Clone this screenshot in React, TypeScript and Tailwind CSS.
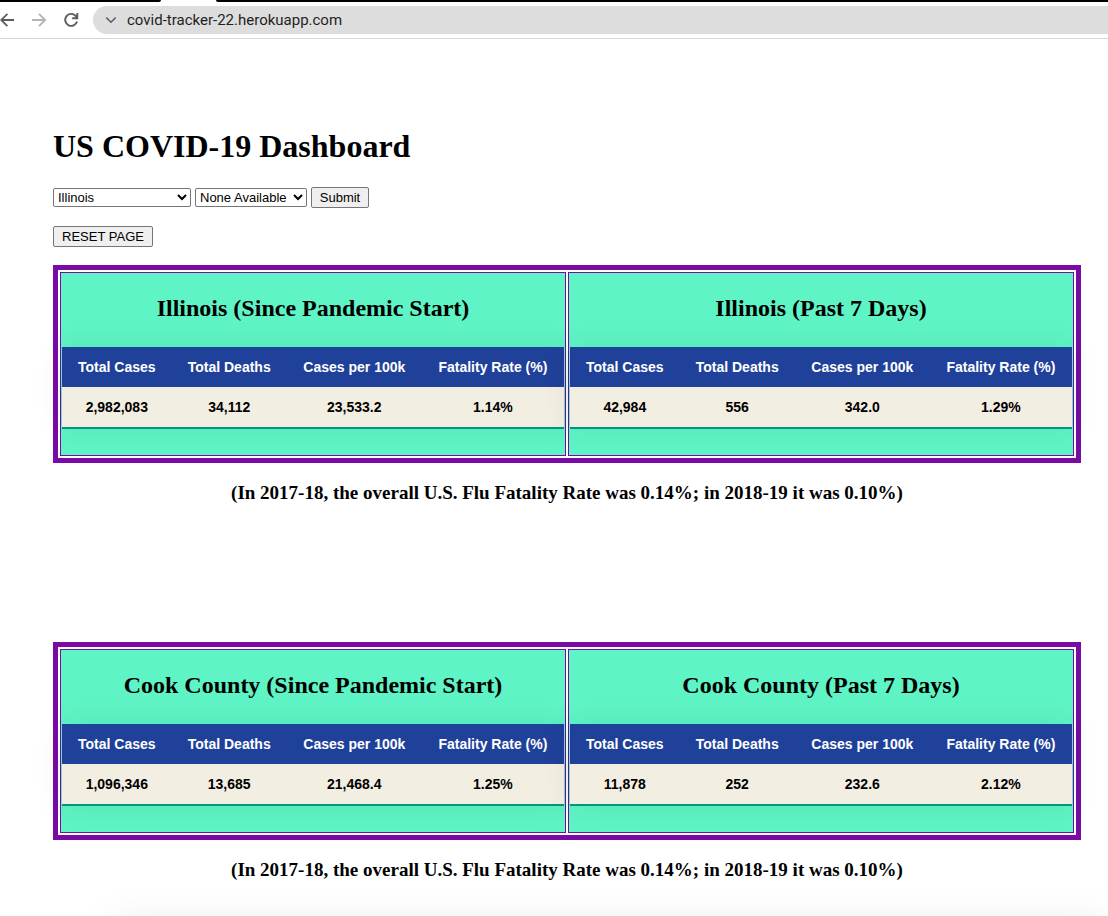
import React from "react";

type Panel = { title: string; values: string[] };

const columns = ["Total Cases", "Total Deaths", "Cases per 100k", "Fatality Rate (%)"];

const regions: Panel[][] = [
  [
    { title: "Illinois (Since Pandemic Start)", values: ["2,982,083", "34,112", "23,533.2", "1.14%"] },
    { title: "Illinois (Past 7 Days)", values: ["42,984", "556", "342.0", "1.29%"] },
  ],
  [
    { title: "Cook County (Since Pandemic Start)", values: ["1,096,346", "13,685", "21,468.4", "1.25%"] },
    { title: "Cook County (Past 7 Days)", values: ["11,878", "252", "232.6", "2.12%"] },
  ],
];

function BrowserBar() {
  return (
    <header className="border-b border-[#d6d6d6] bg-white font-[Roboto,sans-serif]">
      <div className="flex h-[2px]">
        <div className="w-[161px] rounded-br-[2px] bg-black" />
        <div className="w-[55px] bg-white" />
        <div className="grow rounded-bl-[2px] bg-black" />
      </div>
      <div className="flex h-9 items-center">
        <button type="button" aria-label="Back" className="w-4 shrink-0">
          <svg width="16" height="16" viewBox="0 0 16 16" fill="none" stroke="#5c5c5c" strokeWidth="1.8">
            <path d="M14 8H1.2M7.4 1.8 1.2 8l6.2 6.2" />
          </svg>
        </button>
        <button type="button" aria-label="Forward" className="ml-4 w-4 shrink-0">
          <svg width="16" height="16" viewBox="0 0 16 16" fill="none" stroke="#b4b4b4" strokeWidth="1.8">
            <path d="M0 8h13M7 1.8 13.2 8 7 14.2" />
          </svg>
        </button>
        <button type="button" aria-label="Reload" className="ml-4 w-4 shrink-0">
          <svg width="16" height="16" viewBox="0 0 16 16" fill="none" stroke="#5c5c5c" strokeWidth="1.9">
            <path d="M13 9.4A6 6 0 1 1 11.6 3.8l1.6 1.8M13.3 1v5.2H8.2" />
          </svg>
        </button>
        <div className="ml-[13px] flex h-7 grow items-center rounded-l-full bg-[#dddddd] pl-3">
          <svg width="12" height="8" viewBox="0 0 12 8" fill="none" stroke="#5c5c5c" strokeWidth="1.6">
            <path d="m1.3 1.5 4.7 4.7 4.7-4.7" />
          </svg>
          <input
            aria-label="Address"
            defaultValue="covid-tracker-22.herokuapp.com"
            className="ml-[10px] grow bg-transparent text-[15px] text-[#1f1f1f] outline-none"
          />
        </div>
      </div>
    </header>
  );
}

function StatPanel({ title, values }: Panel) {
  return (
    <section className="min-w-0 flex-1 border border-[#7a0aa6] bg-[#5ef4c5] p-px">
      <h2 className="mt-5 mb-[25px] text-center text-2xl leading-7 font-bold">{title}</h2>
      <table
        aria-label={title}
        className="mb-[25px] w-full border-collapse text-center font-['Liberation_Sans',Arial,sans-serif] text-[14px] leading-4 font-bold shadow-[0_0_30px_rgba(0,0,0,0.08)]"
      >
        <thead>
          <tr className="bg-[#20419a] text-white">
            {columns.map((c) => (
              <th key={c} className="px-[14px] py-3 whitespace-nowrap">{c}</th>
            ))}
          </tr>
        </thead>
        <tbody>
          <tr className="border-b-2 border-[#009879] bg-[#f3eee2]">
            {values.map((v, i) => (
              <td key={columns[i]} className="px-[14px] py-3">{v}</td>
            ))}
          </tr>
        </tbody>
      </table>
    </section>
  );
}

export default function App() {
  return (
    <div className="flex h-screen flex-col overflow-hidden bg-white font-['Liberation_Serif','Times_New_Roman',serif] text-black">
      <BrowserBar />
      <main className="pt-[89px] pr-[27px] pl-[53px]">
        <h1 className="text-[32px] leading-9 font-bold">US COVID-19 Dashboard</h1>
        <form
          className="mt-[23px] font-['Liberation_Sans',Arial,sans-serif] text-[13px] leading-[15px]"
          onSubmit={(e) => e.preventDefault()}
        >
          <div className="flex items-center gap-1">
            <select aria-label="State" className="h-[19px] w-[138px] rounded-[2px] border border-[#767676] bg-white">
              <option>Illinois</option>
            </select>
            <select aria-label="County" className="h-[19px] w-[112px] rounded-[2px] border border-[#767676] bg-white">
              <option>None Available</option>
            </select>
            <button type="submit" className="h-[21px] w-[58px] rounded-[2px] border border-[#767676] bg-[#efefef]">
              Submit
            </button>
          </div>
          <button type="reset" className="mt-[18px] block h-[21px] w-[100px] rounded-[2px] border border-[#767676] bg-[#efefef]">
            RESET PAGE
          </button>
        </form>
        <div className="mt-[18px] flex flex-col gap-[138px]">
          {regions.map((panels) => (
            <article key={panels[0].title}>
              <div className="flex gap-[2px] border-[5px] border-[#7a0aa6] p-[2px]">
                {panels.map((p) => (
                  <StatPanel key={p.title} {...p} />
                ))}
              </div>
              <p className="mt-[18px] text-center text-[19px] leading-[23px] font-bold">
                (In 2017-18, the overall U.S. Flu Fatality Rate was 0.14%; in 2018-19 it was 0.10%)
              </p>
            </article>
          ))}
        </div>
      </main>
      <div className="mt-10 ml-28 h-10 shrink-0 bg-white shadow-[0_0_40px_rgba(0,0,0,0.08)]" />
    </div>
  );
}
